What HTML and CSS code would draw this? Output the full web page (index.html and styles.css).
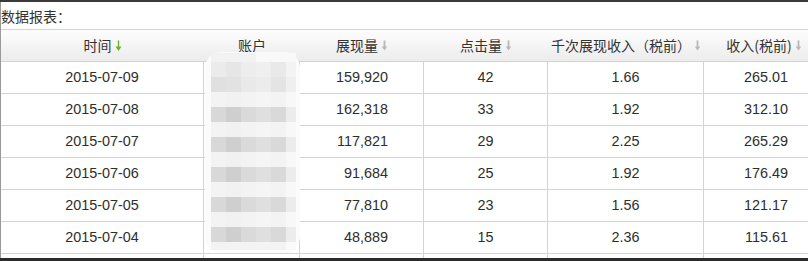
FILE: index.html
```html
<!DOCTYPE html>
<html lang="zh-CN">
<head>
<meta charset="utf-8">
<title>数据报表</title>
<link rel="stylesheet" href="styles.css">
</head>
<body>
<div class="topbar"></div>
<div class="page">
  <div class="title">数据报表：</div>
  <div class="grid">
    <div class="row head">
      <div class="th">时间<svg class="arr on" viewBox="0 0 7 12"><rect x="2.8" y="0.5" width="1.4" height="8"/><polygon points="0.5,6.5 6.5,6.5 3.5,11"/></svg></div>
      <div class="th">账户</div>
      <div class="th">展现量<svg class="arr" viewBox="0 0 7 12"><rect x="2.6" y="0.5" width="1.8" height="8"/><polygon points="0.8,6.5 6.2,6.5 3.5,10.5"/></svg></div>
      <div class="th">点击量<svg class="arr" viewBox="0 0 7 12"><rect x="2.6" y="0.5" width="1.8" height="8"/><polygon points="0.8,6.5 6.2,6.5 3.5,10.5"/></svg></div>
      <div class="th">千次展现收入（税前）<svg class="arr" viewBox="0 0 7 12"><rect x="2.6" y="0.5" width="1.8" height="8"/><polygon points="0.8,6.5 6.2,6.5 3.5,10.5"/></svg></div>
      <div class="th">收入(税前)<svg class="arr" viewBox="0 0 7 12"><rect x="2.6" y="0.5" width="1.8" height="8"/><polygon points="0.8,6.5 6.2,6.5 3.5,10.5"/></svg></div>
    </div>
    <div class="row"><div class="td c">2015-07-09</div><div class="td"></div><div class="td r">159,920</div><div class="td c">42</div><div class="td c">1.66</div><div class="td r">265.01</div></div>
    <div class="row"><div class="td c">2015-07-08</div><div class="td"></div><div class="td r">162,318</div><div class="td c">33</div><div class="td c">1.92</div><div class="td r">312.10</div></div>
    <div class="row"><div class="td c">2015-07-07</div><div class="td"></div><div class="td r">117,821</div><div class="td c">29</div><div class="td c">2.25</div><div class="td r">265.29</div></div>
    <div class="row"><div class="td c">2015-07-06</div><div class="td"></div><div class="td r">91,684</div><div class="td c">25</div><div class="td c">1.92</div><div class="td r">176.49</div></div>
    <div class="row"><div class="td c">2015-07-05</div><div class="td"></div><div class="td r">77,810</div><div class="td c">23</div><div class="td c">1.56</div><div class="td r">121.17</div></div>
    <div class="row"><div class="td c">2015-07-04</div><div class="td"></div><div class="td r">48,889</div><div class="td c">15</div><div class="td c">2.36</div><div class="td r">115.61</div></div>
    <div class="row stub"><div class="td"></div><div class="td"></div><div class="td"></div><div class="td"></div><div class="td"></div><div class="td"></div></div>
  </div>
  <div class="mask">
    <div class="mosaic">
      <div class="mr top"><span></span><span></span><span></span><span></span><span></span><span></span></div>
      <div class="mr mid1"><span></span><span></span><span></span><span></span><span></span><span></span></div>
      <div class="mr mid"><span></span><span></span><span></span><span></span><span></span><span></span></div>
      <div class="mr light"><span></span><span></span><span></span><span></span><span></span><span></span></div>
      <div class="mr dark"><span></span><span></span><span></span><span></span><span></span><span></span></div>
      <div class="mr light"><span></span><span></span><span></span><span></span><span></span><span></span></div>
      <div class="mr dark"><span></span><span></span><span></span><span></span><span></span><span></span></div>
      <div class="mr light"><span></span><span></span><span></span><span></span><span></span><span></span></div>
      <div class="mr dark"><span></span><span></span><span></span><span></span><span></span><span></span></div>
      <div class="mr light"><span></span><span></span><span></span><span></span><span></span><span></span></div>
      <div class="mr dark"><span></span><span></span><span></span><span></span><span></span><span></span></div>
      <div class="mr light"><span></span><span></span><span></span><span></span><span></span><span></span></div>
      <div class="mr dark"><span></span><span></span><span></span><span></span><span></span><span></span></div>
      <div class="mr bottom"><span></span><span></span><span></span><span></span><span></span><span></span></div>
    </div>
  </div>
</div>
<div class="bottombar"></div>
</body>
</html>
```
FILE: styles.css
```css
html, body {
  margin: 0;
  padding: 0;
  background: #fff;
}
body {
  width: 808px;
  height: 261px;
  overflow: hidden;
  font-family: "Liberation Sans", "Noto Sans CJK SC", sans-serif;
  font-size: 14.4px;
  color: #2e2e2e;
}
.topbar {
  height: 2px;
  background: #3a3a3a;
}
.bottombar {
  height: 3px;
  background: #2b2b2b;
}
.page {
  position: relative;
  border-left: 1px solid #9a9a9a;
  width: 840px;
}
.title {
  height: 27px;
  box-sizing: border-box;
  padding-top: 3px;
  line-height: 22px;
  font-family: "Noto Sans CJK SC", sans-serif;
  font-size: 14px;
  color: #333;
}
.grid {
  display: flex;
  flex-direction: column;
}
.row {
  display: grid;
  grid-template-columns: 203px 96px 124px 124px 156px 120px;
  height: 32px;
}
.row.head {
  height: 33px;
  border-top: 1px solid #d3d3d3;
  border-bottom: 1px solid #d3d3d3;
  box-sizing: border-box;
  background: linear-gradient(#fdfdfd, #ececec);
}
.row.stub {
  height: 4px;
}
.th {
  display: flex;
  align-items: center;
  justify-content: center;
  gap: 3px;
  line-height: 31px;
  font-family: "Noto Sans CJK SC", sans-serif;
  font-size: 14px;
  color: #333;
}
.arr {
  width: 7px;
  height: 12px;
  fill: #b8b8b8;
  margin-top: 1px;
}
.arr.on {
  fill: #6fb32c;
}
.td {
  box-sizing: border-box;
  border-right: 1px solid #d3d3d3;
  border-bottom: 1px solid #d3d3d3;
  line-height: 31px;
  white-space: nowrap;
}
.row.stub .td {
  border-bottom: none;
}
.td.c {
  text-align: center;
}
.td.r {
  text-align: right;
  padding-right: 35px;
}
.mask {
  position: absolute;
  left: 204px;
  top: 50px;
  width: 95px;
  height: 201px;
  box-sizing: border-box;
  padding: 1px 0 0 6px;
  background: #fbfbfb;
  border-radius: 16px;
}
.mosaic {
  display: flex;
  flex-direction: column;
}
.mr {
  display: grid;
  grid-template-columns: 15px 15px 15px 15px 15px 10px;
  height: 15px;
}
.mr.top { height: 9px; }
.mr.bottom { height: 8px; }
.mr span { display: block; }
.mr.top span { background: #f2f2f2; }
.mr.top span:nth-child(n+4) { background: #f9f9f9; }
.mr.bottom span { background: #f3f3f3; }
.mr.bottom span:nth-child(6) { background: #fafafa; }
.mr.light span { background: #f3f3f3; }
.mr.light span:nth-child(2) { background: #f1f1f1; }
.mr.light span:nth-child(4) { background: #f5f5f5; }
.mr.light span:nth-child(6) { background: #f8f8f8; }
.mr.mid1 span:nth-child(1) { background: #ebebeb; }
.mr.mid1 span:nth-child(2) { background: #e6e6e6; }
.mr.mid1 span:nth-child(3) { background: #ededed; }
.mr.mid1 span:nth-child(4) { background: #efefef; }
.mr.mid1 span:nth-child(5) { background: #e9e9e9; }
.mr.mid1 span:nth-child(6) { background: #f3f3f3; }
.mr.mid span:nth-child(1) { background: #e0e0e0; }
.mr.mid span:nth-child(2) { background: #e2e2e2; }
.mr.mid span:nth-child(3) { background: #e9e9e9; }
.mr.mid span:nth-child(4) { background: #ececec; }
.mr.mid span:nth-child(5) { background: #e4e4e4; }
.mr.mid span:nth-child(6) { background: #efefef; }
.mr.dark span:nth-child(1) { background: #d8d8d8; }
.mr.dark span:nth-child(2) { background: #cfcfcf; }
.mr.dark span:nth-child(3) { background: #dadada; }
.mr.dark span:nth-child(4) { background: #dfdfdf; }
.mr.dark span:nth-child(5) { background: #d9d9d9; }
.mr.dark span:nth-child(6) { background: #ececec; }
```
